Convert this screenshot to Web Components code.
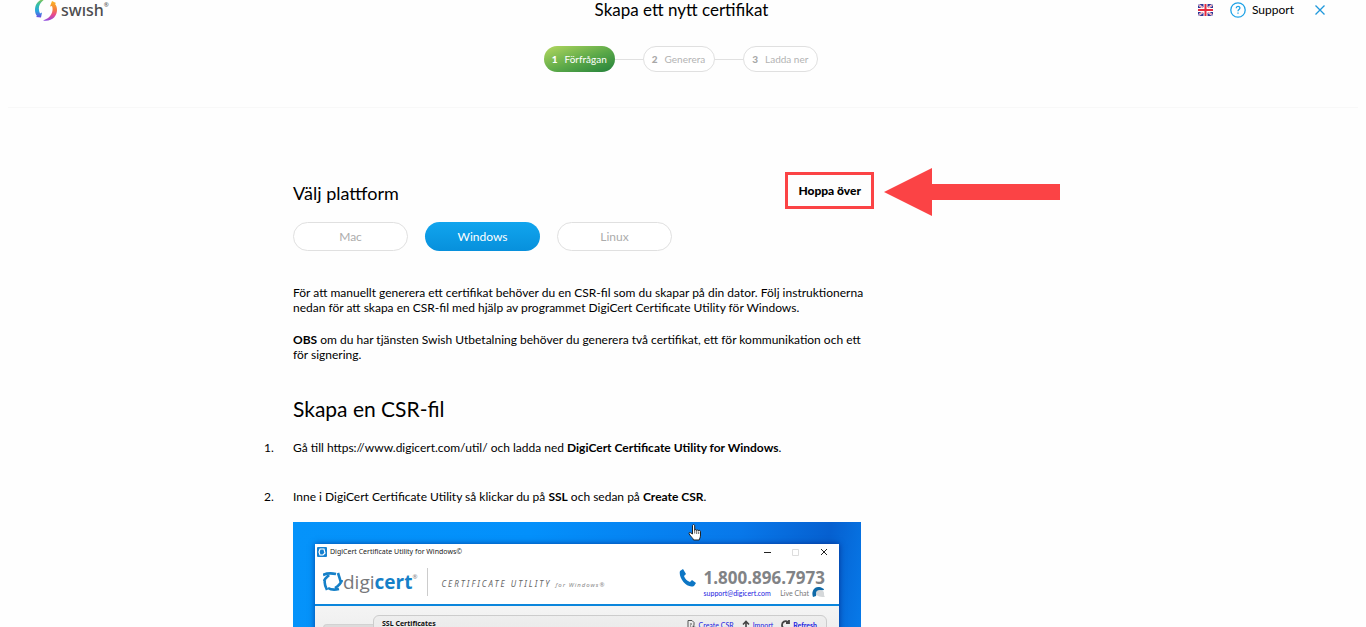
<!DOCTYPE html>
<html lang="sv">
<head>
<meta charset="utf-8">
<title>Skapa ett nytt certifikat</title>
<style>
  html, body { margin: 0; height: 100%; overflow: hidden; background: #fefefe; }
  body { font-family: Lato, "Open Sans", sans-serif; color: #000; }
</style>
</head>
<body>
<cert-page></cert-page>
<script>
const define = (name, html) => customElements.define(name, class extends HTMLElement {
  constructor() {
    super();
    const t = document.createElement('template');
    t.innerHTML = html;
    this.attachShadow({ mode: 'open' }).append(t.content.cloneNode(true));
  }
});

define('swish-logo', `
<style>
  :host { display: flex; align-items: center; gap: 4px; color: #4d4d4f; font: 500 16px/20px "Noto Sans", sans-serif; }
  svg { display: block; }
  sup { font-size: 6px; line-height: 7px; align-self: flex-start; margin: 4px 0 0 -4px; }
</style>
<svg width="22" height="24" viewBox="0 0 22 24" aria-hidden="true">
  <defs>
    <linearGradient id="a" x1="0" y1="0" x2="0" y2="1"><stop offset="0" stop-color="#8bc34a"/><stop offset=".3" stop-color="#35bfa6"/><stop offset=".65" stop-color="#29a5e0"/><stop offset="1" stop-color="#6a4be0"/></linearGradient>
    <linearGradient id="b" x1="0" y1="0" x2="0" y2="1"><stop offset="0" stop-color="#fbb823"/><stop offset=".4" stop-color="#f5823a"/><stop offset=".7" stop-color="#e9488e"/><stop offset="1" stop-color="#8d4be0"/></linearGradient>
  </defs>
  <path d="M10 1C4 1 0 6 0 12c0 3 1 5 2 6l-1 1 5 .5 1-5-2 1C2.500 10 4 5 10 1z" fill="url(#a)"/>
  <path d="M8 22.500c9 1.500 14-4.500 14-10.500 0-3-1-5-2-6l1-1-4-2-2 5.500 2-.5c2 5-1 12-9 14.500z" fill="url(#b)"/>
</svg>
<span>swısh</span><sup>®</sup>`);

define('uk-flag', `
<style>:host, svg { display: block; }</style>
<svg width="15" height="12" viewBox="0 0 15 12" role="img" aria-label="English">
  <rect width="15" height="12" rx="2" fill="#343695"/>
  <path d="M1 1l13 10M14 1L1 11" stroke="#fff" stroke-width="2"/>
  <path d="M1 1l13 10M14 1L1 11" stroke="#e3425a" stroke-width=".7"/>
  <path d="M7.5 0v12M0 6h15" stroke="#fff" stroke-width="4"/>
  <path d="M7.5 0v12M0 6h15" stroke="#e52b40" stroke-width="2"/>
</svg>`);

define('step-pill', `
<style>
  :host { display: flex; gap: 7px; height: 24px; align-items: center; padding: 0 9px 0 8px; border: 1px solid #e0e0e0; border-radius: 14px; color: #b3b3b3; background: #fff; font-size: 10px; line-height: 12px; }
  :host([current]) { color: #fff; border: 0; height: 26px; padding: 0 8px; background: linear-gradient(160deg, #b4d85f, #5aa848 55%, #23813b); }
  b { font-weight: 900; color: #a8a8a8; }
  :host([current]) b { color: inherit; }
</style>
<b><slot name="n"></slot></b><slot></slot>`);

define('page-header', `
<style>
  :host { display: block; height: 107px; margin: 0 8px; border-bottom: 1px solid #f8f8f8; }
  .bar { display: grid; grid-template: 20px / 1fr auto 1fr; align-items: center; padding: 0 30px 0 27px; }
  h1 { margin: 0; font-weight: 400; font-size: 17px; line-height: 20px; }
  nav { display: flex; justify-content: flex-end; align-items: center; }
  a { display: flex; align-items: center; gap: 6px; color: #000; text-decoration: none; font-size: 12px; line-height: 16px; }
  .help { margin: 0 18px 0 17px; }
  button { display: block; padding: 3px; border: 0; background: none; }
  svg { display: block; }
  ol { list-style: none; display: flex; justify-content: center; align-items: center; margin: 26px 4px 0 0; padding: 0; }
  li { display: flex; align-items: center; }
  li + li::before { content: ""; width: 28px; height: 1px; background: #e0e0e0; }
</style>
<div class="bar">
  <swish-logo></swish-logo>
  <h1>Skapa ett nytt certifikat</h1>
  <nav>
    <a href="#en"><uk-flag></uk-flag></a>
    <a class="help" href="#support">
      <svg width="16" height="16" viewBox="0 0 16 16" fill="none" stroke="#1ea2e6" stroke-width="1.3" aria-hidden="true"><circle cx="8" cy="8" r="7.2"/><path d="M6.2 6.3c0-2.5 3.7-2.4 3.7-.2C9.900 7.500 8 7.600 8 9.200M8 10.600v1.200"/></svg>
      Support</a>
    <button aria-label="Stäng"><svg width="10" height="10" viewBox="0 0 10 10" stroke="#1e98dc" stroke-width="1.3"><path d="M.5.5l9 9M9.500.5l-9 9"/></svg></button>
  </nav>
</div>
<ol>
  <li><step-pill current><span slot="n">1</span>Förfrågan</step-pill></li>
  <li><step-pill><span slot="n">2</span>Generera</step-pill></li>
  <li><step-pill><span slot="n">3</span>Ladda ner</step-pill></li>
</ol>`);

define('platform-option', `
<style>
  :host { display: block; }
  button { display: block; width: 115px; height: 29px; padding: 0; border: 1px solid #e0e0e0; border-radius: 15px; background: #fff; color: #acacac; font: inherit; font-size: 12px; line-height: 15px; }
  :host([selected]) button { border: 0; color: #fff; background: linear-gradient(#11a5ee, #0790dc); }
</style>
<button><slot></slot></button>`);

define('skip-callout', `
<style>
  :host { display: block; position: relative; }
  a { display: block; box-sizing: border-box; padding: 8px 10px; border: 3px solid #fb4345; color: #000; text-decoration: none; font-weight: 900; font-size: 12px; line-height: 15px; }
  svg { position: absolute; left: calc(100% + 10px); top: -4px; }
</style>
<a href="#hoppa">Hoppa över</a>
<svg width="176" height="48" viewBox="0 0 176 48" aria-hidden="true"><path d="M0 24L48 0v16h128v16H48v16z" fill="#fb4345"/></svg>`);

define('utility-window', `
<style>
  :host { display: block; background: #fff; box-shadow: 0 0 6px #0058; font-family: "Noto Sans", sans-serif; font-size: 7px; line-height: 10px; color: #222; }
  svg { display: block; }
  .title { display: flex; align-items: center; height: 15px; padding: 0 11px 0 2px; gap: 3px; }
  .title span { flex: 1; }
  .title .ctl { margin-left: 18px; }
  .brand { display: flex; align-items: center; height: 45px; padding: 0 14px 0 8px; border-bottom: 2px solid #0b86dc; }
  .name { font: 19px/24px "Open Sans", sans-serif; color: #77787b; }
  .name b { color: #1580c8; }
  .name sup { font-size: 6px; line-height: 6px; vertical-align: 10px; }
  .sep { width: 1px; height: 28px; margin: 0 13px 0 10px; background: #ccc; }
  .tag { flex: 1; padding-top: 6px; font-style: italic; letter-spacing: 2px; color: #666; font-size: 8px; white-space: nowrap; }
  .tag small { font-size: 6px; letter-spacing: 1px; color: #888; }
  .contact { display: grid; grid-template-columns: auto auto; column-gap: 7px; padding-top: 4px; }
  .tel { font: 700 17px/17px "Open Sans", sans-serif; color: #818386; }
  .sub { display: flex; justify-content: space-between; align-items: center; grid-column: 2; height: 11px; color: #777; font-family: Lato, sans-serif; }
  a { color: #2121e0; text-decoration: none; }
  .chat { display: flex; gap: 3px; align-items: center; }
  .body { height: 80px; padding: 9px 12px 0 8px; background: linear-gradient(#f4f4f4, #e2e2e2); display: flex; }
  .side { width: 49px; margin-top: 9px; border: 1px solid #d2d2d2; border-right: 0; border-radius: 4px 0 0 0; background: #dcdcdc; }
  .tab { flex: 1; display: flex; align-items: flex-start; gap: 8px; padding: 3px 9px 3px 8px; border: 1px solid #ccc; border-radius: 6px 6px 0 0; background: linear-gradient(#eee, #ddd); }
  .tab strong { flex: 1; color: #111; }
  .tab a { display: flex; gap: 3px; align-items: center; text-decoration: underline; padding-top: 1px; font-family: Lato, sans-serif; }
</style>
<div class="title">
  <svg width="10" height="10" viewBox="0 0 10 10"><rect width="10" height="10" rx="1" fill="#1580d0"/><path d="M3 2h4l1 4-2 2H3L2 5z" fill="none" stroke="#fff" stroke-width="1.2"/></svg>
  <span>DigiCert Certificate Utility for Windows©</span>
  <svg width="7" height="8" viewBox="0 0 7 8" stroke="#222"><path d="M0 4.500h7"/></svg>
  <svg class="ctl" width="7" height="8" viewBox="0 0 7 8" fill="none" stroke="#ddd"><path d="M.5 1.500h6v6h-6z"/></svg>
  <svg class="ctl" width="8" height="8" viewBox="0 0 8 8" stroke="#222"><path d="M1 1l6 6M7 1L1 7"/></svg>
</div>
<div class="brand">
  <svg width="20" height="20" viewBox="0 0 20 20" fill="none" stroke="#1580c8" stroke-width="2.600"><path d="M0 3c4-2 8-2 13-1M15 1c1 3 2 6 3 10M19 8c-1 4-4 6-7 8M16 17c-4 1-8 1-11-1M4 18c-2-4-3-7-2-10M1 9c1-3 3-4 5-6"/></svg>
  <div class="name">digi<b>cert</b><sup>®</sup></div>
  <div class="sep"></div>
  <div class="tag">CERTIFICATE UTILITY <small>for Windows®</small></div>
  <div class="contact">
    <svg width="18" height="18" viewBox="0 0 18 18"><path d="M1 2l3-2 3 5-2 2c1 3 3 5 6 6l2-2 4 3-2 3C8 20-1 9 1 2z" fill="#0d76c4"/></svg>
    <div class="tel">1.800.896.7973</div>
    <div class="sub"><a href="#mail">support@digicert.com</a><span class="chat">Live Chat
      <svg width="13" height="11" viewBox="0 0 13 11"><path d="M1 10C-1 5 2 0 6 0c4 0 6 2 6 3L5 4l-1 5z" fill="#0f6aa8"/><path d="M4 6c0-4 8-4 8 0 0 2 0 3 1 4-3 0-9 0-9-4z" fill="#d5d8da"/></svg></span></div>
  </div>
</div>
<div class="body">
  <div class="side"></div>
  <div class="tab">
    <strong>SSL Certificates</strong>
    <a href="#csr"><svg width="9" height="10" viewBox="0 0 9 10" fill="none" stroke="#555"><path d="M1 .5h4l2 2v3M1 .5v8h3M3 4h2M3 6h1"/><path d="M6.500 5.500v4M4.500 7.500h4" stroke-width="1.500"/></svg>Create CSR</a>
    <a href="#import"><svg width="8" height="10" viewBox="0 0 8 10" fill="none" stroke="#444" stroke-width="1.600"><path d="M4 9V1.500M1 4.500l3-3 3 3"/></svg>Import</a>
    <a href="#refresh"><svg width="9" height="10" viewBox="0 0 9 10" fill="none" stroke="#444" stroke-width="1.800"><path d="M7 2C4 0 1 2 1 5s3 5 6 3M8 0v3H5"/></svg><b>Refresh</b></a>
  </div>
</div>`);

define('desktop-shot', `
<style>
  :host { display: block; position: relative; padding: 22px 22px 0; background: linear-gradient(100deg, #0593fa, #0390fb 40%, #0878ea 75%, #0660d0 90%, #0780ef); }
  .hand { position: absolute; left: 395px; top: 2px; }
</style>
<utility-window></utility-window>
<svg class="hand" width="14" height="17" viewBox="0 0 14 17" aria-hidden="true"><path d="M4.500 10V2c0-2 2.200-2 2.200 0v4.500c0-1.500 2-1.300 2 .2 0-1.300 2-1 2 .3 0-1 1.800-.8 1.800.6V11c0 3-1 3.500-1.300 5H5.500C5 14 3 13 1.200 10c-.8-1.500.7-2 1.500-1.200z" fill="#fff" stroke="#222"/><path d="M6.700 6.500v3M8.700 7v3M10.700 7.500v2.500" stroke="#222" stroke-width=".7"/></svg>`);

define('csr-guide', `
<style>
  :host { display: block; width: min(776px, 100%); margin: 0 auto; font-size: 12px; line-height: 15px; }
  .col { width: 568px; }
  .top { display: flex; justify-content: space-between; align-items: center; padding-top: 64px; margin-right: -13px; }
  h2 { margin: 0; padding-top: 4px; font-weight: 400; font-size: 18px; line-height: 24px; }
  .opts { display: flex; gap: 17px; margin: 13px 0 34px; }
  p { margin: 0 -8px 17px 0; }
  h3 { margin: 35px 0 19px; font-weight: 400; font-size: 21px; line-height: 24px; }
  b { font-weight: 700; }
  ol { list-style: none; margin: 0 0 18px -29px; padding: 0; display: grid; row-gap: 34px; }
  li { display: grid; grid-template-columns: 29px 1fr; }
</style>
<div class="col">
  <div class="top"><h2>Välj plattform</h2><skip-callout></skip-callout></div>
  <div class="opts">
    <platform-option>Mac</platform-option>
    <platform-option selected>Windows</platform-option>
    <platform-option>Linux</platform-option>
  </div>
  <p>För att manuellt generera ett certifikat behöver du en CSR-fil som du skapar på din dator. Följ instruktionerna nedan för att skapa en CSR-fil med hjälp av programmet DigiCert Certificate Utility för Windows.</p>
  <p><b>OBS</b> om du har tjänsten Swish Utbetalning behöver du generera två certifikat, ett för kommunikation och ett för signering.</p>
  <h3>Skapa en CSR-fil</h3>
  <ol>
    <li><span>1.</span><span>Gå till https://www.digicert.com/util/ och ladda ned <b>DigiCert Certificate Utility for Windows</b>.</span></li>
    <li><span>2.</span><span>Inne i DigiCert Certificate Utility så klickar du på <b>SSL</b> och sedan på <b>Create CSR</b>.</span></li>
  </ol>
  <desktop-shot></desktop-shot>
</div>`);

define('cert-page', `
<style>
  :host { display: block; height: 100vh; overflow: hidden; }
  main { padding-right: 4px; }
</style>
<page-header></page-header>
<main><csr-guide></csr-guide></main>`);
</script>
</body>
</html>
